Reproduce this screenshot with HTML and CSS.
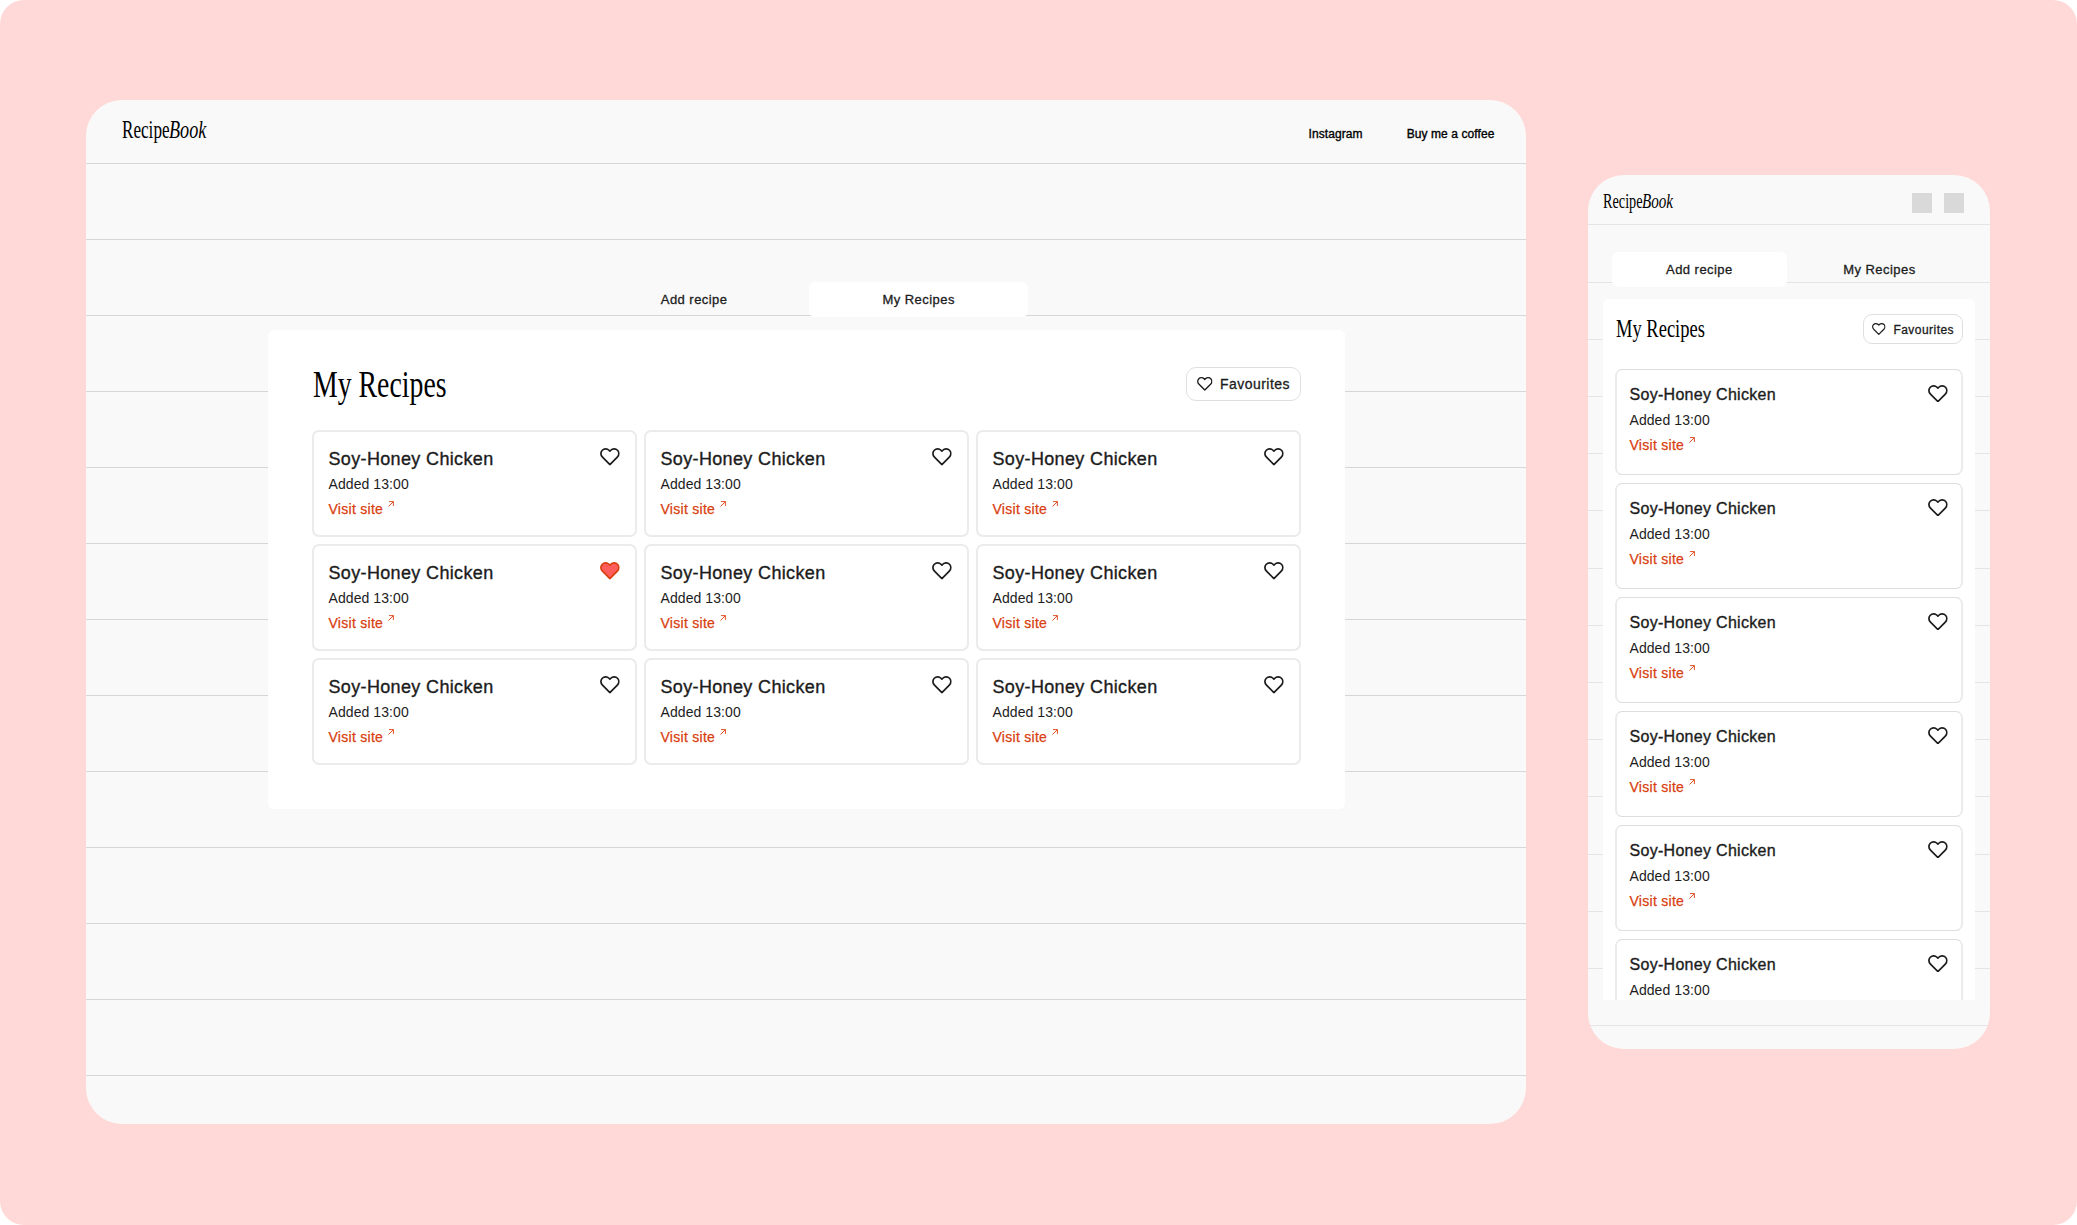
FILE: index.html
```html
<!DOCTYPE html>
<html lang="en">
<head>
    <meta charset="UTF-8">
    <meta name="viewport" content="width=device-width, initial-scale=1.0">
    <title>RecipeBook</title>
    <link rel="stylesheet" href="styles.css">
</head>
<body>

<svg class="sprite" aria-hidden="true">
    <symbol id="heart" viewBox="0.5 2 23 20.7">
        <path d="M20.84 4.61a5.5 5.5 0 0 0-7.78 0L12 5.67l-1.06-1.06a5.5 5.5 0 0 0-7.78 7.78l1.06 1.06L12 21.23l7.78-7.78 1.06-1.06a5.5 5.5 0 0 0 0-7.78z"/>
    </symbol>
    <symbol id="arrow" viewBox="0 0 6 6">
        <path d="M0.5 5.5L5.3 0.7M1 0.6H5.4V5"/>
    </symbol>
</svg>

<main class="board">
    <section class="screen desktop">
        <header>
            <div class="logo"><span class="recipe">Recipe</span><span class="book">Book</span></div>
            <nav>
                <a>Instagram</a>
                <a>Buy me a coffee</a>
            </nav>
        </header>
        <div class="tabs">
            <button class="tab">Add recipe</button>
            <button class="tab active">My Recipes</button>
        </div>
        <div class="panel">
            <div class="panel-head">
                <h1>My Recipes</h1>
                <button class="favourites"><svg class="heart"><use href="#heart"/></svg>Favourites</button>
            </div>
            <div class="cards" data-count="9" data-liked="3"></div>
        </div>
    </section>

    <section class="screen phone">
        <header>
            <div class="logo"><span class="recipe">Recipe</span><span class="book">Book</span></div>
            <div class="links"><i></i><i></i></div>
        </header>
        <div class="tabs">
            <button class="tab active">Add recipe</button>
            <button class="tab">My Recipes</button>
        </div>
        <div class="panel">
            <div class="panel-head">
                <h1>My Recipes</h1>
                <button class="favourites"><svg class="heart"><use href="#heart"/></svg>Favourites</button>
            </div>
            <div class="cards" data-count="6"></div>
        </div>
    </section>
</main>

<script>
    function createCard(liked) {
        return `
            <article class="card">
                <div>
                    <h2>Soy-Honey Chicken</h2>
                    <p>Added 13:00</p>
                    <a class="visit">Visit site<svg class="arrow"><use href="#arrow"/></svg></a>
                </div>
                <svg class="heart ${liked ? "liked" : ""}"><use href="#heart"/></svg>
            </article>
        `;
    }

    document.querySelectorAll(".cards").forEach(function(list) {
        const liked = Number(list.dataset.liked);
        for (let i = 0; i < Number(list.dataset.count); i++) {
            list.innerHTML += createCard(i === liked);
        }
    });
</script>

</body>
</html>
```
FILE: styles.css
```css
* {
    box-sizing: border-box;
    margin: 0;
    padding: 0;
}

body {
    background: white;
    font-family: "Liberation Sans", Arial, sans-serif;
    color: #1c1c1c;
}

button {
    font-family: inherit;
    color: inherit;
    background: none;
    border: none;
}

.sprite {
    display: none;
}

.board {
    display: flex;
    align-items: flex-start;
    gap: 62px;
    height: 1225px;
    padding: 100px 0 0 86.4px;
    background: #ffd9d7;
    border-radius: 24px;
}

.screen {
    flex: none;
    overflow: hidden;
    border-radius: 36px;
}

/* ruled notebook lines */
.desktop {
    width: 1440px;
    height: 1024px;
    background: repeating-linear-gradient(#d6d6d6 63.03px 64.03px, #f9f9f9 64.03px 139.06px);
}

.phone {
    width: 402px;
    height: 874px;
    margin-top: 75px;
    background: repeating-linear-gradient(#e4e4e4 49.45px 50.45px, #f9f9f9 50.45px 106.65px);
}

header {
    display: flex;
    justify-content: space-between;
}

.desktop header {
    align-items: baseline;
    height: 64px;
    padding: 16px 32px 0 35.6px;
}

.phone header {
    height: 50px;
    padding: 14px 26px 0 14.5px;
}

/* logo */
.logo {
    display: flex;
    font-family: "Liberation Serif", "Times New Roman", serif;
    font-size: 25px;
    line-height: 28px;
    color: #000;
}

.phone .logo {
    font-size: 20.8px;
    line-height: 24px;
}

.logo span {
    transform-origin: left;
}

.recipe {
    width: 1.9em;
    transform: scaleX(0.685);
}

.book {
    width: 1.5em;
    font-style: italic;
    transform: scaleX(0.726);
}

nav {
    display: flex;
    gap: 44px;
    font-size: 12px;
    letter-spacing: 0.08px;
    color: #000;
    -webkit-text-stroke: 0.35px;
}

.links {
    display: flex;
    gap: 12px;
    padding-top: 4px;
}

.links i {
    width: 20px;
    height: 20px;
    background: #d9d9d9;
}

/* tabs */
.tabs {
    display: flex;
    justify-content: center;
    gap: 5px;
    margin-top: 118px;
}

.tab {
    width: 219.5px;
    height: 35px;
    border-radius: 6px;
    font-size: 13px;
    letter-spacing: 0.45px;
    -webkit-text-stroke: 0.3px;
}

.tab.active {
    background: white;
}

.phone .tabs {
    gap: 4.5px;
    margin-top: 27px;
}

.phone .tab {
    width: 175.5px;
}

/* panel */
.panel {
    width: 1077px;
    height: 479px;
    margin: 13px 0 0 181.6px;
    padding: 37px 44px 0;
    background: white;
    border-radius: 6px;
}

.phone .panel {
    width: 371.4px;
    height: 701px;
    margin: 12px 0 0 14.9px;
    padding: 15px 11.7px 0;
    border-radius: 6px 6px 0 0;
    overflow: hidden;
}

.panel-head {
    display: flex;
    justify-content: space-between;
    margin-bottom: 29px;
}

.phone .panel-head {
    margin-bottom: 25px;
}

h1 {
    margin-left: 1px;
    font: 38.5px/34px "Liberation Serif", "Times New Roman", serif;
    color: #000;
    transform: scaleX(0.722);
    transform-origin: left;
}

.phone h1 {
    font-size: 26px;
    line-height: 29px;
    transform: scaleX(0.712);
}

.favourites {
    display: flex;
    align-items: center;
    gap: 7.5px;
    width: 115px;
    height: 34px;
    padding-left: 10px;
    border: 1px solid #dfdfdf;
    border-radius: 10px;
    font-size: 14px;
    letter-spacing: 0.45px;
    -webkit-text-stroke: 0.3px;
}

.phone .favourites {
    width: 100px;
    height: 30px;
    padding: 1px 0 0 8.4px;
    border-radius: 9px;
    font-size: 12px;
}

.heart {
    flex: none;
    width: 19.8px;
    height: 17.8px;
    margin-top: 1px;
    fill: none;
    stroke: #1c1c1c;
    stroke-width: 2;
    stroke-linecap: round;
    stroke-linejoin: round;
}

.heart.liked {
    fill: #ff5c5c;
    stroke: #d9400f;
}

.favourites .heart {
    width: 15.6px;
    height: 14px;
    margin-top: 0;
}

.phone .favourites .heart {
    width: 13.6px;
    height: 12.2px;
}

/* recipe cards */
.cards {
    display: grid;
    grid-template-columns: repeat(3, 325px);
    gap: 7px;
}

.phone .cards {
    grid-template-columns: 348px;
    gap: 8px;
}

.card {
    display: flex;
    justify-content: space-between;
    height: 107px;
    padding: 15px 14.8px 0 14.5px;
    border: 2px solid #ebebeb;
    border-radius: 7px;
}

.phone .card {
    height: 106px;
    padding: 13px 12.8px 0 12.5px;
    border-width: 1px 2px;
    border-color: #dedede #ebebeb;
}

.phone .card .heart {
    margin-top: 1.5px;
}

h2 {
    margin-bottom: 1px;
    font-size: 18px;
    font-weight: normal;
    line-height: 24px;
    letter-spacing: 0.35px;
    -webkit-text-stroke: 0.35px;
}

.phone h2 {
    font-size: 16px;
    letter-spacing: 0.3px;
}

.card p {
    font-size: 14px;
    line-height: 25px;
    letter-spacing: 0.08px;
}

.visit {
    display: flex;
    font-size: 14px;
    line-height: 25px;
    letter-spacing: 0.28px;
    color: #d9400f;
    -webkit-text-stroke: 0.25px;
}

.arrow {
    width: 6px;
    height: 6px;
    margin: 4px 0 0 5px;
    fill: none;
    stroke: #d9400f;
    stroke-width: 0.9;
}
```
